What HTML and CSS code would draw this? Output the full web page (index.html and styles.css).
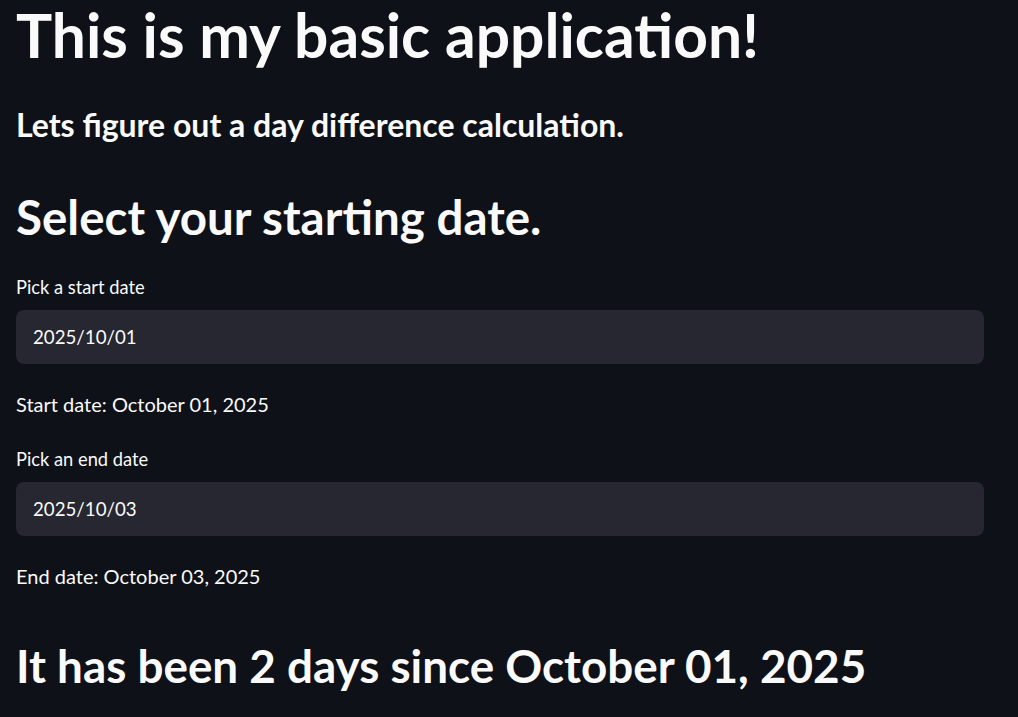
FILE: index.html
```html
<!DOCTYPE html>
<html lang="en">
<head>
<meta charset="utf-8">
<title>Day difference</title>
<link rel="stylesheet" href="styles.css">
</head>
<body>
<main class="app">
  <h1 class="title">This is my basic application!</h1>
  <p class="subtitle">Lets figure out a day difference calculation.</p>
  <h3 class="section">Select your starting date.</h3>
  <label class="field-label">Pick a start date</label>
  <div class="date-input">2025/10/01</div>
  <p class="text">Start date: October 01, 2025</p>
  <label class="field-label field-label-2">Pick an end date</label>
  <div class="date-input">2025/10/03</div>
  <p class="text">End date: October 03, 2025</p>
  <h2 class="result">It has been 2 days since October 01, 2025</h2>
</main>
</body>
</html>
```
FILE: styles.css
```css
html, body {
  margin: 0;
  padding: 0;
  background: #0e1117;
  color: #fafafa;
  font-family: "Lato", "Open Sans", sans-serif;
}

.app {
  display: flex;
  flex-direction: column;
  padding: 0 34px 0 16px;
}

.title {
  margin: 0;
  font-size: 60.5px;
  line-height: 70px;
  font-weight: 700;
}

.subtitle {
  margin: 36px 0 0;
  font-size: 32px;
  line-height: 38px;
  font-weight: 700;
}

.section {
  margin: 45px 0 0;
  font-size: 47.5px;
  line-height: 56px;
  font-weight: 700;
}

.field-label {
  margin-top: 31px;
  font-size: 18.3px;
  line-height: 22px;
}

.field-label-2 {
  margin-top: 31px;
}

.date-input {
  margin-top: 12px;
  height: 54px;
  display: flex;
  align-items: center;
  padding-left: 17px;
  background: #262730;
  border-radius: 8px;
  font-size: 18.7px;
}

.text {
  margin: 27px 0 0;
  font-size: 20px;
  line-height: 26px;
}

.result {
  margin: 50px 0 0;
  font-size: 45.8px;
  line-height: 54px;
  font-weight: 700;
}
```
